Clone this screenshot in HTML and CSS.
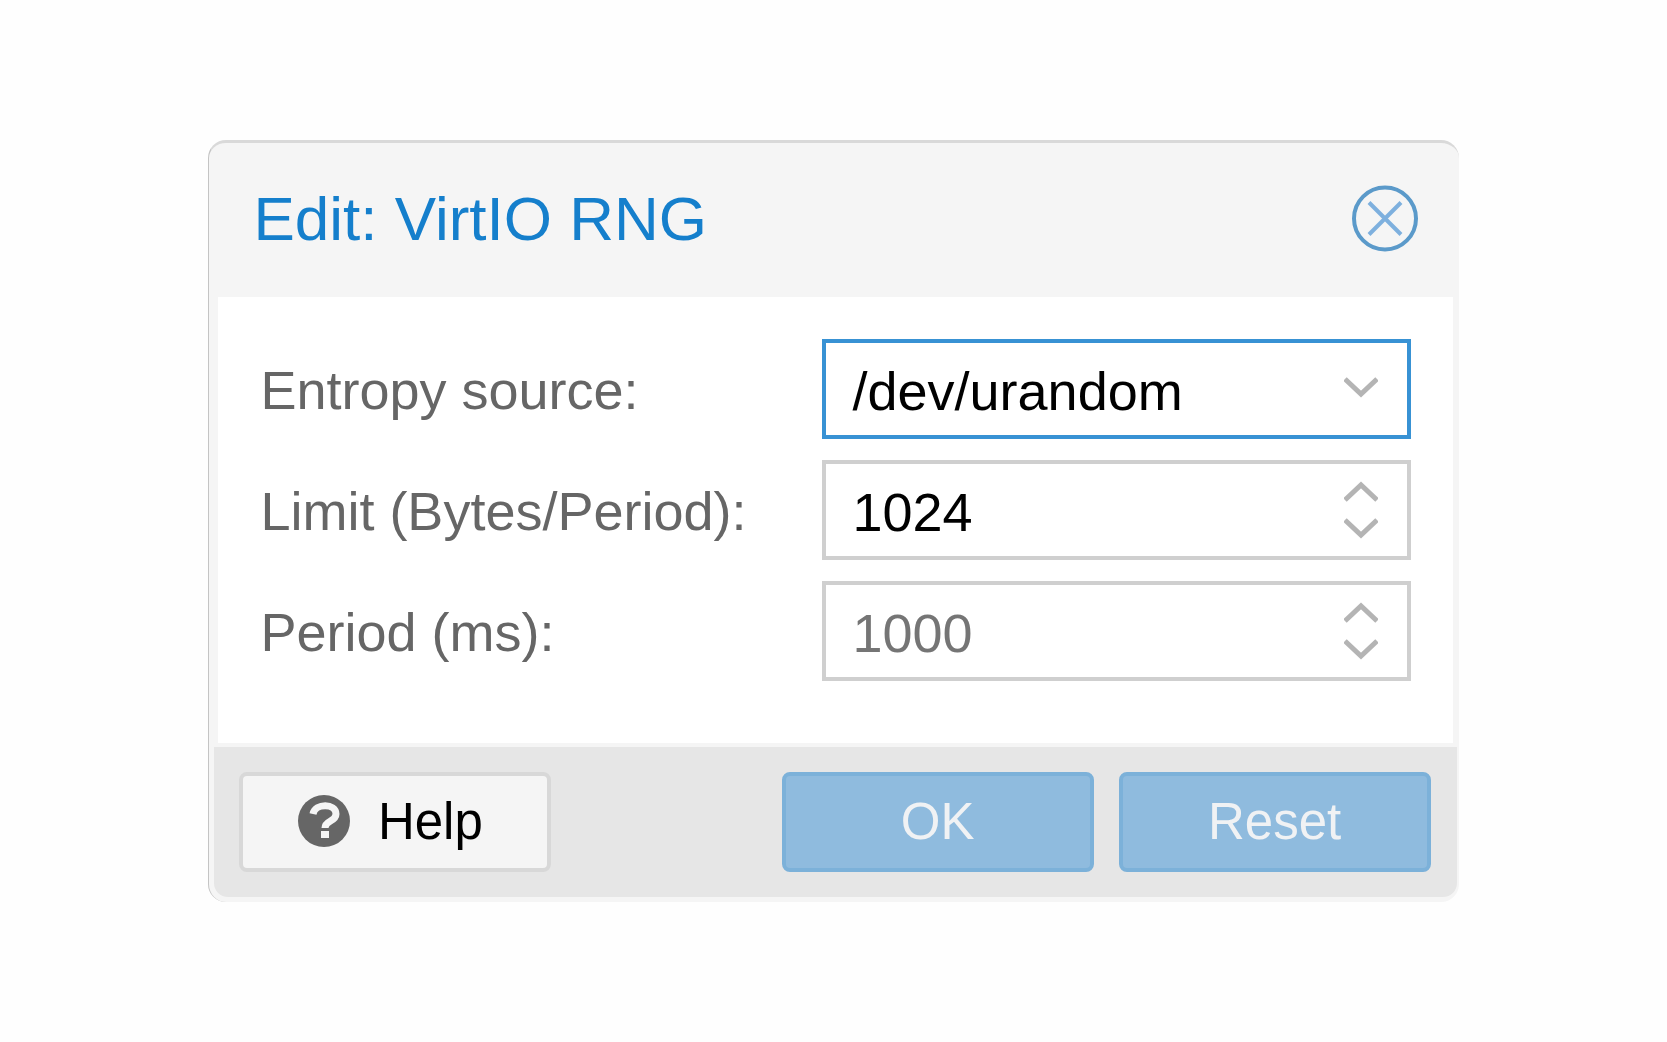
FILE: index.html
```html
<!DOCTYPE html>
<html lang="en">
<head>
	<meta charset="UTF-8">
	<title>Edit: VirtIO RNG</title>
	<link rel="stylesheet" href="styles.css">
</head>
<body>
<form class="window">
	<div class="header">
		<h1 class="title">Edit: VirtIO RNG</h1>
		<button type="button" class="close" aria-label="Close">
			<svg class="close-icon" viewBox="0 0 66 66">
				<circle cx="33" cy="33" r="31"/>
				<path d="M17 17L49 49M49 17L17 49"/>
			</svg>
		</button>
	</div>

	<div class="fields">
		<label class="label" for="source">Entropy source:</label>
		<div class="field">
			<select class="input input-active" id="source">
				<option>/dev/urandom</option>
				<option>/dev/random</option>
				<option>/dev/hwrng</option>
			</select>
			<div class="triggers triggers-select">
				<svg class="arrow" viewBox="0 0 34 21"><path d="M1 2L17 17L33 2"/></svg>
			</div>
		</div>

		<label class="label" for="limit">Limit (Bytes/Period):</label>
		<div class="field">
			<input class="input" id="limit" type="number" value="1024">
			<div class="triggers">
				<button type="button" class="spin" aria-label="Increase limit"><svg class="arrow" viewBox="0 0 34 21"><path d="M1 19L17 4L33 19"/></svg></button>
				<button type="button" class="spin" aria-label="Decrease limit"><svg class="arrow" viewBox="0 0 34 21"><path d="M1 2L17 17L33 2"/></svg></button>
			</div>
		</div>

		<label class="label" for="period">Period (ms):</label>
		<div class="field">
			<input class="input" id="period" type="number" placeholder="1000">
			<div class="triggers">
				<button type="button" class="spin" aria-label="Increase period"><svg class="arrow" viewBox="0 0 34 21"><path d="M1 19L17 4L33 19"/></svg></button>
				<button type="button" class="spin" aria-label="Decrease period"><svg class="arrow" viewBox="0 0 34 21"><path d="M1 2L17 17L33 2"/></svg></button>
			</div>
		</div>
	</div>

	<div class="footer">
		<button type="button" class="btn btn-help">
			<svg class="help-icon" viewBox="0 0 52 52">
				<circle cx="26" cy="26" r="26"/>
				<path d="M15 19C17 8 38 8 38 19C38 27 27 25 27 33"/>
				<rect x="23" y="36" width="8" height="7"/>
			</svg>
			Help
		</button>
		<button type="submit" class="btn btn-blue" disabled>OK</button>
		<button type="reset" class="btn btn-blue" disabled>Reset</button>
	</div>
</form>
</body>
</html>
```

FILE: styles.css
```css
* {
	box-sizing: border-box;
}

body {
	margin: 0;
	min-height: 100vh;
	display: flex;
	align-items: center;
	justify-content: center;
	background-color: #fefefe;
	font-family: "Liberation Sans", Arial, sans-serif;
}

button, input, select {
	font-family: inherit;
}

.window {
	width: 75%;
	padding: 0 2px 5px 5px;
	border-top: 3px solid #d9d9d9;
	border-left: 1px solid #c4c4c4;
	border-radius: 18px;
	background-color: #f5f5f5;
	overflow: hidden;
}

.header {
	display: flex;
	align-items: center;
	justify-content: space-between;
	padding: 42px 39px 45px 39px;
}
.title {
	margin: 0;
	font-size: 62px;
	font-weight: normal;
	line-height: 66px;
	color: #157fcc;
}
.close {
	display: flex;
	padding: 0;
	border: 0;
	background: none;
}
.close-icon {
	width: 66px;
	height: 67px;
	fill: none;
	stroke: #5b9aca;
	stroke-width: 4;
}
.close-icon path {
	stroke: #7eb0de;
}

.fields {
	display: grid;
	grid-template-columns: 562fr 588fr;
	row-gap: 21px;
	margin: 0 4px 4px 4px;
	padding: 42px 42px 62px 42px;
	background-color: #fff;
}
.label {
	padding-top: 3px;
	font-size: 54px;
	line-height: 97px;
	white-space: nowrap;
	color: #666;
}
.field {
	position: relative;
}
.input {
	display: block;
	width: 100%;
	height: 100px;
	margin: 0;
	padding: 3px 80px 0 26px;
	border: 4px solid #cfcfcf;
	border-radius: 0;
	outline: none;
	background-color: #fff;
	font-size: 54px;
	color: #000;
	appearance: none;
}
.input[type=number] {
	appearance: textfield;
}
.input::-webkit-inner-spin-button {
	display: none;
}
.input::placeholder {
	color: #757575;
}
.input-active {
	border-color: #3892d4;
}

.triggers {
	position: absolute;
	top: 21px;
	right: 33px;
	display: flex;
	flex-direction: column;
	gap: 16px;
}
.triggers-select {
	top: 38px;
	pointer-events: none;
}
.spin {
	display: flex;
	padding: 0;
	border: 0;
	background: none;
}
.arrow {
	display: block;
	width: 34px;
	height: 21px;
	fill: none;
	stroke: #b4b4b4;
	stroke-width: 5;
}

.footer {
	display: flex;
	gap: 25px;
	padding: 25px 26px 25px 25px;
	border-radius: 0 0 14px 14px;
	background-color: #e6e6e6;
}
.btn {
	display: flex;
	align-items: center;
	justify-content: center;
	width: 312px;
	height: 100px;
	padding: 0 0 2px;
	border: 4px solid #d8d8d8;
	border-radius: 8px;
	background-color: #f5f5f5;
	font-size: 51px;
	color: #000;
}
.btn-help {
	gap: 28px;
	margin-right: auto;
	padding-right: 10px;
}
.btn-blue {
	border-color: #7cb1d9;
	background-color: #8fbbde;
	color: #f0f2f4;
}
.help-icon {
	width: 52px;
	height: 52px;
	fill: #666;
}
.help-icon path {
	fill: none;
	stroke: #f5f5f5;
	stroke-width: 7;
}
.help-icon rect {
	fill: #f5f5f5;
}
```
